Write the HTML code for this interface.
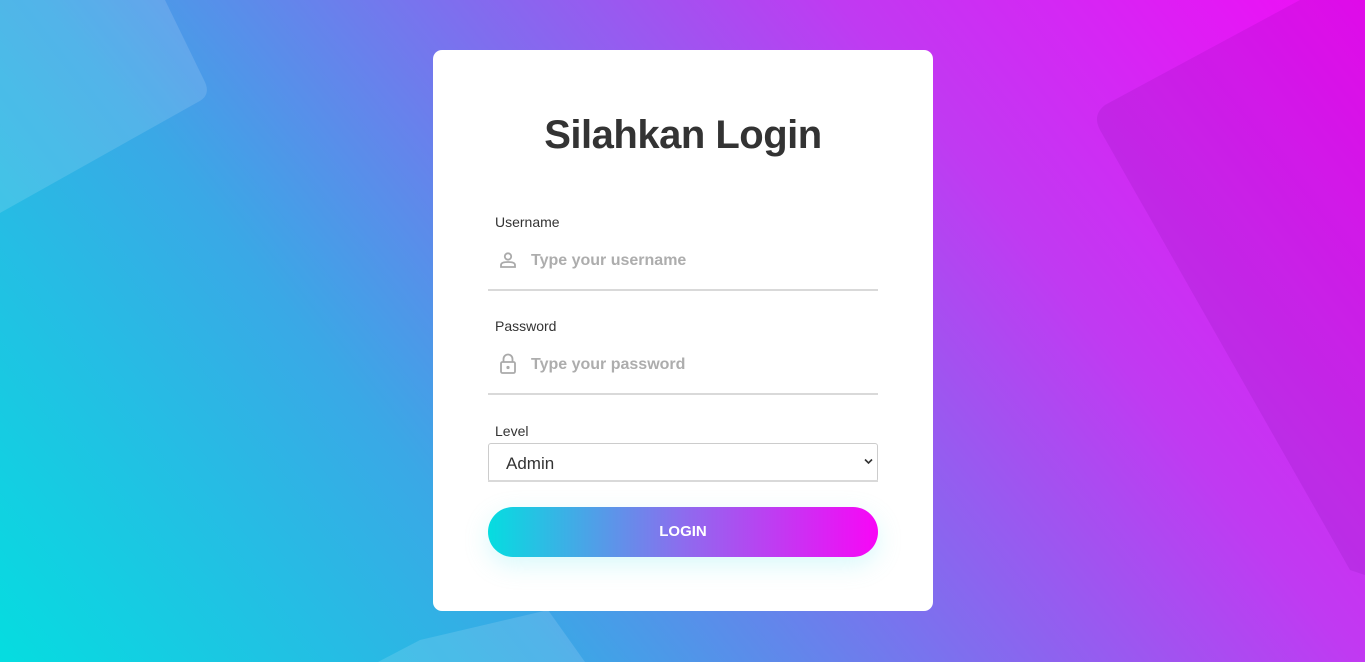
<!DOCTYPE html>
<html><head><meta charset="utf-8"><style>
html,body{margin:0;padding:0;width:1365px;height:662px;overflow:hidden;font-family:"Liberation Sans",sans-serif}
body{position:relative;background:linear-gradient(52deg,#05dde0 0%,#3aa8e6 30%,#7a72ee 50%,#c03af2 72%,#f10cf6 100%)}
svg.bg{position:absolute;left:0;top:0}
.card{position:absolute;left:433px;top:50px;width:500px;height:561px;background:#fff;border-radius:9px}
h1{position:absolute;left:0;width:100%;top:63px;margin:0;text-align:center;font-size:40px;font-weight:bold;color:#333;letter-spacing:-0.5px}
.lbl{position:absolute;left:62px;font-size:14px;color:#333}
.inp{position:absolute;left:55px;width:390px;height:2px;background:#d9d9d9}
.ph{position:absolute;left:98px;font-size:16px;color:#adadad;font-weight:bold}
.ic{position:absolute;left:66px}
.sel{position:absolute;left:55px;top:393px;width:388px;height:37px;border:1px solid #ccc;border-radius:3px;font-size:17px;color:#333}
.sel span{position:absolute;left:17px;top:10px}
.btn{position:absolute;left:55px;top:457px;width:390px;height:50px;border-radius:25px;background:linear-gradient(90deg,#05dde0,#8d6cee 50%,#f806f6);color:#fff;font-weight:bold;font-size:15px;text-align:center;line-height:50px;box-shadow:0 8px 24px rgba(100,230,240,0.25)}
</style></head><body>
<svg class="bg" width="1365" height="662">
<path d="M0 0 L165 0 L204 80 Q212 95 198 102 L0 213 Z" fill="rgba(255,255,255,0.13)"/>
<path d="M378 662 L420 640 L548 610 L585 662 Z" fill="rgba(255,255,255,0.13)"/>
<path d="M1105 105 L1300 0 L1365 0 L1365 575 L1350 570 L1100 130 Q1092 115 1105 105 Z" fill="rgba(80,0,120,0.1)"/>
</svg>
<div class="card">
<h1>Silahkan Login</h1>
<div class="lbl" style="top:164px">Username</div>
<svg class="ic" style="top:201px" width="18" height="18" viewBox="0 0 18 18"><circle cx="9" cy="5.5" r="3.2" fill="none" stroke="#aaa" stroke-width="1.8"/><path d="M2 16 V14 Q2 11 9 11 Q16 11 16 14 V16 Z" fill="none" stroke="#aaa" stroke-width="1.8"/></svg>
<div class="ph" style="top:202px">Type your username</div>
<div class="inp" style="top:239px"></div>
<div class="lbl" style="top:268px">Password</div>
<svg class="ic" style="top:303px" width="18" height="22" viewBox="0 0 18 22"><path d="M4.5 9 V6 A4.5 4.5 0 0 1 13.5 6 V9" fill="none" stroke="#aaa" stroke-width="1.8"/><rect x="2" y="9" width="14" height="11" rx="1.5" fill="none" stroke="#aaa" stroke-width="1.8"/><circle cx="9" cy="14.5" r="1.6" fill="#aaa"/></svg>
<div class="ph" style="top:306px">Type your password</div>
<div class="inp" style="top:343px"></div>
<div class="lbl" style="top:373px">Level</div>
<div class="sel"><span>Admin</span><svg style="position:absolute;right:4px;top:14px" width="9" height="7" viewBox="0 0 9 7"><path d="M1 1.5 L4.5 5 L8 1.5" fill="none" stroke="#333" stroke-width="1.6"/></svg></div>
<div class="inp" style="top:430px"></div>
<div class="btn">LOGIN</div>
</div>
</body></html>
